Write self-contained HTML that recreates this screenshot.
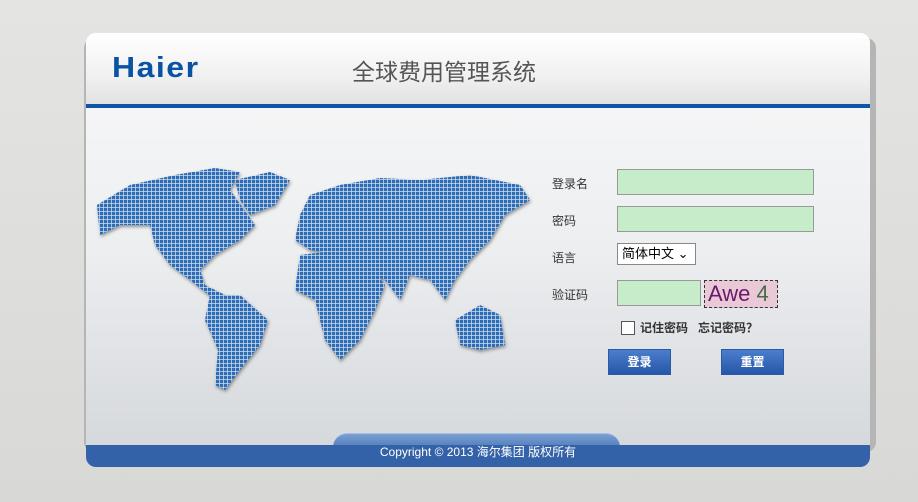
<!DOCTYPE html>
<html><head><meta charset="utf-8"><style>
body{margin:0;width:918px;height:502px;background:linear-gradient(#e4e4e2,#d8d8d6);font-family:"Liberation Sans","Noto Sans CJK SC",sans-serif;position:relative;overflow:hidden}
.shadow{position:absolute;left:84px;top:38px;width:792px;height:414px;background:#b5b5b5;border-radius:10px}
.panel{position:absolute;left:86px;top:33px;width:784px;height:434px;border-radius:10px;overflow:hidden;background:linear-gradient(#f9f9f9,#eceef0 50%,#d3d6da)}
.head{position:absolute;left:0;top:0;width:784px;height:71px;background:linear-gradient(#fff,#f1f1f1 60%,#e2e2e2)}
.line{position:absolute;left:0;top:71px;width:784px;height:4px;background:#0d55a6}
.logo{position:absolute;left:26px;top:16px;font:bold 32px "Liberation Sans",sans-serif;color:#0a52a2;letter-spacing:1.5px;transform:scaleY(.9)}
.title{position:absolute;left:266px;top:20px;font-size:23px;color:#555}
.foot{position:absolute;left:0;top:412px;width:784px;height:22px;background:#3462a8}
.tab{position:absolute;left:247px;top:400px;width:287px;height:20px;border-radius:14px 14px 0 0;background:linear-gradient(#7aa0d2,#3f6cb0);border-top:1px solid #a9bfe0}
.copy{position:absolute;left:0;top:411px;width:784px;text-align:center;color:#fff;font-size:12px;line-height:16px}
.lbl{position:absolute;left:466px;font-size:12px;color:#333}
.inp{position:absolute;left:531px;width:197px;height:26px;background:#c7ecca;border:1px solid #999;box-sizing:border-box}
.btn{position:absolute;top:316px;width:63px;height:26px;background:linear-gradient(#4a7fcc,#2756a8);border:1px solid #2a5aa5;box-sizing:border-box;color:#fff;font-size:12px;font-weight:bold;text-align:center;line-height:24px}
</style></head><body>
<div class="shadow"></div>
<div class="panel">
<div class="head"></div><div class="line"></div>
<div class="logo">Haier</div>
<div class="title">全球费用管理系统</div>
<svg style="position:absolute;left:0;top:0" width="784" height="434">
<defs><pattern id="g" width="4" height="4" patternUnits="userSpaceOnUse"><rect width="4" height="4" fill="#d8e4f2"/><rect width="3.3" height="3.3" fill="#2e6cb6"/></pattern>
<filter id="s"><feDropShadow dx="1" dy="2" stdDeviation="1.5" flood-color="#555" flood-opacity=".6"/></filter></defs>
<g fill="url(#g)" filter="url(#s)" transform="translate(-86,-33)">
<polygon points="97,205 130,185 175,175 215,168 240,172 230,190 255,225 240,240 215,255 200,270 205,285 225,295 215,300 190,280 170,265 155,245 150,225 120,225 100,235"/>
<polygon points="235,180 270,172 290,180 275,205 250,215 240,200"/>
<polygon points="210,295 240,295 268,320 260,345 240,370 225,390 215,385 218,350 205,320"/>
<polygon points="300,215 310,195 340,185 380,178 420,180 470,175 520,185 530,200 505,215 490,240 470,260 455,280 445,300 430,280 410,275 400,300 385,280 360,270 340,255 310,250 295,240"/>
<polygon points="300,255 340,250 370,265 385,285 375,310 360,340 340,360 325,340 315,300 295,290"/>
<polygon points="455,320 480,305 500,315 505,345 480,350 460,345"/>
</g></svg>
<div class="lbl" style="top:142px">登录名</div>
<div class="inp" style="top:136px"></div>
<div class="lbl" style="top:179px">密码</div>
<div class="inp" style="top:173px"></div>
<div class="lbl" style="top:216px">语言</div>
<div style="position:absolute;left:531px;top:210px;width:79px;height:22px;border:1px solid #888;box-sizing:border-box;background:#fff;font-size:13px;line-height:20px;padding-left:4px">简体中文 ⌄</div>
<div class="lbl" style="top:253px">验证码</div>
<div class="inp" style="top:247px;width:84px"></div>
<div style="position:absolute;left:618px;top:247px;width:74px;height:28px;border:1px dashed #333;box-sizing:border-box;background:#e9c9d6;color:#6a1a6a;font-size:22px;line-height:26px;padding-left:3px">Awe <span style="color:#4a6a4a">4</span></div>
<div style="position:absolute;left:535px;top:288px;width:12px;height:12px;border:1px solid #555;background:#fff"></div>
<div style="position:absolute;left:554px;top:286px;font-size:12px;font-weight:bold;color:#333">记住密码 &nbsp; 忘记密码？</div>
<div class="btn" style="left:522px">登录</div>
<div class="btn" style="left:635px">重置</div>
<div class="tab"></div><div class="foot"></div>
<div class="copy">Copyright © 2013 海尔集团 版权所有</div>
</div>
</body></html>
